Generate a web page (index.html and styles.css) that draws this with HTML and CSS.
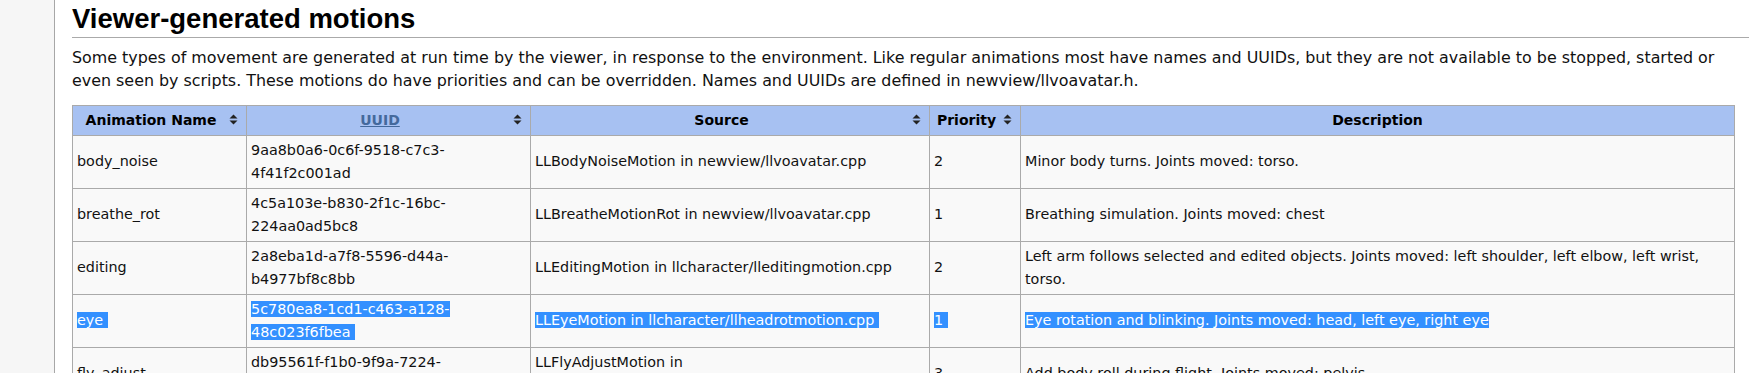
FILE: index.html
```html
<!DOCTYPE html>
<html lang="en">
<head>
<meta charset="utf-8">
<title>Viewer-generated motions</title>
<link rel="stylesheet" href="styles.css">
</head>
<body>
<div class="page">
  <aside class="sidebar"></aside>
  <main class="content">
    <h2 class="section-title">Viewer-generated motions</h2>
    <p class="intro">Some types of movement are generated at run time by the viewer, in response to the environment. Like regular animations most have names and UUIDs, but they are not available to be stopped, started or even seen by scripts. These motions do have priorities and can be overridden. Names and UUIDs are defined in newview/llvoavatar.h.</p>
    <table class="wikitable">
      <colgroup>
        <col class="c-name">
        <col class="c-uuid">
        <col class="c-source">
        <col class="c-prio">
        <col class="c-desc">
      </colgroup>
      <thead>
        <tr>
          <th class="sortable">Animation Name<span class="sort"><svg width="9" height="11" viewBox="0 0 9 11"><path d="M0.5 4.5 L4.5 0.5 L8.5 4.5 Z M0.5 6.5 L8.5 6.5 L4.5 10.5 Z"/></svg></span></th>
          <th class="sortable"><a class="link" href="#">UUID</a><span class="sort"><svg width="9" height="11" viewBox="0 0 9 11"><path d="M0.5 4.5 L4.5 0.5 L8.5 4.5 Z M0.5 6.5 L8.5 6.5 L4.5 10.5 Z"/></svg></span></th>
          <th class="sortable">Source<span class="sort"><svg width="9" height="11" viewBox="0 0 9 11"><path d="M0.5 4.5 L4.5 0.5 L8.5 4.5 Z M0.5 6.5 L8.5 6.5 L4.5 10.5 Z"/></svg></span></th>
          <th class="sortable">Priority<span class="sort"><svg width="9" height="11" viewBox="0 0 9 11"><path d="M0.5 4.5 L4.5 0.5 L8.5 4.5 Z M0.5 6.5 L8.5 6.5 L4.5 10.5 Z"/></svg></span></th>
          <th>Description</th>
        </tr>
      </thead>
      <tbody>
        <tr>
          <td>body_noise</td>
          <td>9aa8b0a6-0c6f-9518-c7c3-4f41f2c001ad</td>
          <td>LLBodyNoiseMotion in newview/llvoavatar.cpp</td>
          <td>2</td>
          <td>Minor body turns. Joints moved: torso.</td>
        </tr>
        <tr>
          <td>breathe_rot</td>
          <td>4c5a103e-b830-2f1c-16bc-224aa0ad5bc8</td>
          <td>LLBreatheMotionRot in newview/llvoavatar.cpp</td>
          <td>1</td>
          <td>Breathing simulation. Joints moved: chest</td>
        </tr>
        <tr>
          <td>editing</td>
          <td>2a8eba1d-a7f8-5596-d44a-b4977bf8c8bb</td>
          <td>LLEditingMotion in llcharacter/lleditingmotion.cpp</td>
          <td>2</td>
          <td>Left arm follows selected and edited objects. Joints moved: left shoulder, left elbow, left wrist, torso.</td>
        </tr>
        <tr>
          <td><span class="sel">eye&nbsp;</span></td>
          <td><span class="sel">5c780ea8-1cd1-c463-a128-48c023f6fbea&nbsp;</span></td>
          <td><span class="sel">LLEyeMotion in llcharacter/llheadrotmotion.cpp&nbsp;</span></td>
          <td><span class="sel">1&nbsp;</span></td>
          <td><span class="sel">Eye rotation and blinking. Joints moved: head, left eye, right eye</span></td>
        </tr>
        <tr>
          <td>fly_adjust</td>
          <td>db95561f-f1b0-9f9a-7224-b12f71af126e</td>
          <td>LLFlyAdjustMotion in llcharacter/llkeyframewalkmotion.cpp</td>
          <td>3</td>
          <td>Add body roll during flight. Joints moved: pelvis</td>
        </tr>
      </tbody>
    </table>
  </main>
</div>
</body>
</html>
```

FILE: styles.css
```css
html, body {
  margin: 0;
  padding: 0;
  background: #ffffff;
}

body {
  font-family: "DejaVu Sans", Verdana, sans-serif;
  font-size: 15.9px;
  color: #111111;
}

.page {
  display: flex;
  min-height: 373px;
}

.sidebar {
  width: 54px;
  flex: 0 0 54px;
  background: #f6f6f6;
  border-right: 1px solid #a7a7a7;
}

.content {
  flex: 1;
  min-width: 0;
  padding: 0 13px 0 17px;
}

.section-title {
  font-family: "Liberation Sans", Arial, sans-serif;
  font-weight: bold;
  font-size: 27.5px;
  line-height: 32px;
  color: #000000;
  margin: 3px 0 0;
  padding: 0 0 2px;
  border-bottom: 1px solid #aaaaaa;
}

.intro {
  margin: 7.5px 0 12.5px;
  padding-right: 16px;
  line-height: 23.3px;
}

.wikitable {
  border-collapse: collapse;
  table-layout: fixed;
  width: 1662px;
  background: #f9f9f9;
  border: 1px solid #aaaaaa;
  font-size: 14.35px;
  line-height: 23px;
}

.c-name { width: 174px; }
.c-uuid { width: 284px; }
.c-source { width: 399px; }
.c-prio { width: 91px; }
.c-desc { width: 714px; }

.wikitable th,
.wikitable td {
  border: 1px solid #aaaaaa;
  padding: 3px 4px;
}

.wikitable td {
  text-align: left;
  vertical-align: middle;
}

.wikitable th {
  background: #a7c1f2;
  font-size: 14px;
  font-weight: bold;
  text-align: center;
  color: #000000;
  position: relative;
}

.wikitable th.sortable {
  padding-right: 21px;
}

.sort {
  position: absolute;
  right: 8px;
  top: 50%;
  width: 9px;
  height: 11px;
  margin-top: -6px;
  display: block;
}

.sort svg {
  display: block;
  fill: #222222;
}

.link {
  color: #44699c;
  text-decoration: underline;
}

.sel {
  background: #3390ff;
  color: #ffffff;
}
```
